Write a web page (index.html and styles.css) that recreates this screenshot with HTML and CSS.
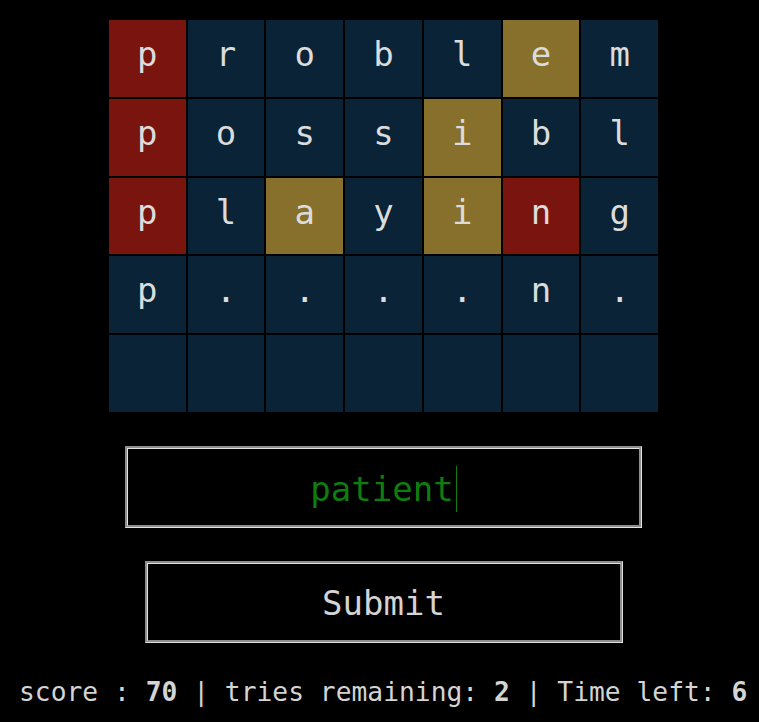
FILE: index.html
```html
<!DOCTYPE html>
<html>
<head>
<meta charset="utf-8">
<link rel="stylesheet" href="styles.css">
</head>
<body>
<div class="page">
  <div class="board">
    <div class="cell miss">p</div><div class="cell">r</div><div class="cell">o</div><div class="cell">b</div><div class="cell">l</div><div class="cell near">e</div><div class="cell">m</div>
    <div class="cell miss">p</div><div class="cell">o</div><div class="cell">s</div><div class="cell">s</div><div class="cell near">i</div><div class="cell">b</div><div class="cell">l</div>
    <div class="cell miss">p</div><div class="cell">l</div><div class="cell near">a</div><div class="cell">y</div><div class="cell near">i</div><div class="cell miss">n</div><div class="cell">g</div>
    <div class="cell">p</div><div class="cell">.</div><div class="cell">.</div><div class="cell">.</div><div class="cell">.</div><div class="cell">n</div><div class="cell">.</div>
    <div class="cell"></div><div class="cell"></div><div class="cell"></div><div class="cell"></div><div class="cell"></div><div class="cell"></div><div class="cell"></div>
  </div>
  <div class="guess"><span class="guess-text">patient</span><span class="caret"></span></div>
  <button class="submit">Submit</button>
  <div class="status">score : <b>70</b> | tries remaining: <b>2</b> | Time left: <b>6</b></div>
</div>
</body>
</html>
```
FILE: styles.css
```css
html, body {
  margin: 0;
  padding: 0;
  background: #000;
}
body {
  font-family: "DejaVu Sans Mono", monospace;
  color: #d4d4d4;
  overflow: hidden;
}
.page {
  width: 767px;
  padding-top: 20px;
  display: flex;
  flex-direction: column;
  align-items: center;
}
.board {
  width: 549px;
  display: grid;
  grid-template-columns: repeat(7, 1fr);
  grid-auto-rows: 76.8px;
  gap: 2px;
}
.cell {
  background: #0a2337;
  color: #dcdcdc;
  font-size: 34px;
  display: flex;
  justify-content: center;
  padding-top: 14px;
  box-sizing: border-box;
}
.cell.miss { background: #79140f; }
.cell.near { background: #87702b; }
.guess {
  margin-top: 34px;
  width: 517px;
  height: 82px;
  box-sizing: border-box;
  border: 3px groove #e2e2e2;
  display: flex;
  justify-content: center;
  align-items: center;
  padding-top: 4px;
  color: #0e7d0e;
  font-size: 34px;
}
.caret {
  display: inline-block;
  width: 1px;
  height: 46px;
  background: #0e7d0e;
  margin-left: 2px;
}
.submit {
  margin-top: 33px;
  width: 478px;
  height: 82px;
  box-sizing: border-box;
  border: 3px groove #e2e2e2;
  background: #000;
  color: #d4d4d4;
  font-family: "DejaVu Sans Mono", monospace;
  font-size: 34px;
  padding: 3px 0 0;
}
.status {
  align-self: flex-start;
  margin-top: 34px;
  padding-left: 19px;
  font-size: 26.3px;
  white-space: nowrap;
}
.status b { font-weight: bold; }
```
